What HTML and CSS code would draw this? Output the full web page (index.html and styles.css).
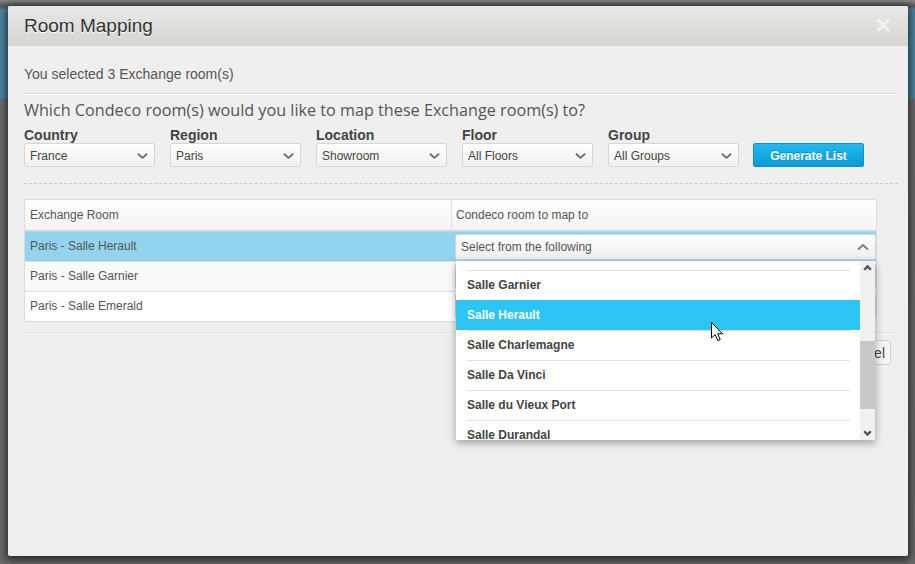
FILE: index.html
```html
<!DOCTYPE html>
<html>
<head>
<meta charset="utf-8">
<title>Room Mapping</title>
<link rel="stylesheet" href="styles.css">
</head>
<body>
<div class="modal">
  <div class="modal-header">
    <h1 class="modal-title">Room Mapping</h1>
    <span class="close">×</span>
  </div>
  <div class="modal-body">
    <p class="intro">You selected 3 Exchange room(s)</p>
    <h2 class="question">Which Condeco room(s) would you like to map these Exchange room(s) to?</h2>
    <div class="filters">
      <div class="field">
        <label class="field-label">Country</label>
        <div class="select"><span>France</span><svg class="chev" viewBox="0 0 12 8"><path d="M1 1.5 L6 6 L11 1.5"/></svg></div>
      </div>
      <div class="field">
        <label class="field-label">Region</label>
        <div class="select"><span>Paris</span><svg class="chev" viewBox="0 0 12 8"><path d="M1 1.5 L6 6 L11 1.5"/></svg></div>
      </div>
      <div class="field">
        <label class="field-label">Location</label>
        <div class="select"><span>Showroom</span><svg class="chev" viewBox="0 0 12 8"><path d="M1 1.5 L6 6 L11 1.5"/></svg></div>
      </div>
      <div class="field">
        <label class="field-label">Floor</label>
        <div class="select"><span>All Floors</span><svg class="chev" viewBox="0 0 12 8"><path d="M1 1.5 L6 6 L11 1.5"/></svg></div>
      </div>
      <div class="field">
        <label class="field-label">Group</label>
        <div class="select"><span>All Groups</span><svg class="chev" viewBox="0 0 12 8"><path d="M1 1.5 L6 6 L11 1.5"/></svg></div>
      </div>
      <button class="btn-primary">Generate List</button>
    </div>

    <div class="table">
      <div class="tr thead">
        <div class="td c1">Exchange Room</div>
        <div class="td c2">Condeco room to map to</div>
      </div>
      <div class="tr row-active">
        <div class="td c1">Paris - Salle Herault</div>
        <div class="td c2">
          <div class="room-select open">
            <span>Select from the following</span>
            <svg class="chev up" viewBox="0 0 12 8"><path d="M1 6.5 L6 2 L11 6.5"/></svg>
            <div class="dropdown">
              <ul class="options">
                <li class="opt"><span>Salle Garnier</span></li>
                <li class="opt selected"><span>Salle Herault</span></li>
                <li class="opt"><span>Salle Charlemagne</span></li>
                <li class="opt"><span>Salle Da Vinci</span></li>
                <li class="opt"><span>Salle du Vieux Port</span></li>
                <li class="opt"><span>Salle Durandal</span></li>
              </ul>
              <div class="scrollbar">
                <svg class="sb-arrow" viewBox="0 0 8 6"><path d="M1 5 L4 2 L7 5"/></svg>
                <div class="sb-track"><div class="sb-thumb"></div></div>
                <svg class="sb-arrow" viewBox="0 0 8 6"><path d="M1 1 L4 4 L7 1"/></svg>
              </div>
            </div>
          </div>
        </div>
      </div>
      <div class="tr row-alt">
        <div class="td c1">Paris - Salle Garnier</div>
        <div class="td c2"><div class="room-select"></div></div>
      </div>
      <div class="tr">
        <div class="td c1">Paris - Salle Emerald</div>
        <div class="td c2"><div class="room-select"></div></div>
      </div>
    </div>

    <div class="footer">
      <button class="btn-default">Cancel</button>
    </div>
  </div>
</div>
<svg class="cursor" viewBox="0 0 13 20"><path d="M0.5 0.5 L0.5 16 L4.2 12.6 L6.8 18.6 L9.2 17.6 L6.7 11.8 L11.6 11.8 Z"/></svg>
</body>
</html>
```

FILE: styles.css
```css
* { box-sizing: border-box; }
html, body { margin: 0; padding: 0; }
body {
  width: 915px;
  height: 564px;
  overflow: hidden;
  font-family: "Liberation Sans", Arial, sans-serif;
  background: linear-gradient(to bottom, #8a8a8a 0, #575757 6px, #4f86a2 10px, #4f86a2 98px, #6c6c6c 100px, #6a6a6a 100%);
  position: relative;
}
.modal {
  margin: 6px 0 0 8px;
  width: 900px;
  height: 550px;
  background: #efefef;
  border-radius: 2px;
  box-shadow: 0 2px 8px 2px rgba(0,0,0,0.65);
}
.modal-header {
  height: 40px;
  padding: 0 16px;
  display: flex;
  align-items: center;
  justify-content: space-between;
  background: linear-gradient(to bottom, #e9e9e7, #d5d5d1);
  border-radius: 2px 2px 0 0;
}
.modal-title {
  margin: 0;
  font-size: 19px;
  font-weight: normal;
  color: #333;
  text-shadow: 0 1px 0 #fff;
}
.close {
  font-size: 26px;
  font-weight: bold;
  color: #f3f3f1;
  line-height: 1;
  margin-right: 1px;
  margin-top: -2px;
}
.modal-body {
  padding: 0 10px 0 16px;
}
.intro {
  margin: 0;
  padding: 20px 0 11px;
  font-size: 14px;
  line-height: 16px;
  color: #555;
  border-bottom: 1px solid #dcdcdc;
  box-shadow: 0 1px 0 #fafafa;
}
.question {
  margin: 5px 0 0;
  font-family: "Open Sans", sans-serif;
  font-size: 16.2px;
  font-weight: normal;
  line-height: 22px;
  color: #555;
}
.filters {
  display: flex;
  align-items: flex-end;
  gap: 15px;
  margin-top: 6px;
  padding-bottom: 16px;
  border-bottom: 1px dashed #c8c8c8;
}
.field {
  width: 131px;
  display: flex;
  flex-direction: column;
}
.field-label {
  font-size: 14px;
  font-weight: bold;
  line-height: 16px;
  color: #444;
}
.select {
  height: 24px;
  border: 1px solid #d6d6d6;
  border-radius: 2px;
  background: linear-gradient(to bottom, #ffffff, #f1f1f1);
  display: flex;
  align-items: center;
  justify-content: space-between;
  padding: 1px 6px 0 5px;
  font-size: 12px;
  color: #444;
}
.chev {
  width: 11px;
  height: 8px;
  fill: none;
  stroke: #6a6a6a;
  stroke-width: 2;
}
.btn-primary {
  height: 24px;
  width: 111px;
  margin-left: -1px;
  border: 1px solid #1391c9;
  border-radius: 2px;
  background: linear-gradient(to bottom, #21b9ef, #0a9ad8);
  color: #fff;
  font-family: "Liberation Sans", Arial, sans-serif;
  font-size: 12px;
  font-weight: bold;
  text-shadow: 0 -1px 0 rgba(0,0,0,0.2);
  padding: 1px 0 0;
}
.table {
  margin-top: 15px;
  width: 853px;
  border: 1px solid #dcdcdc;
  background: #fff;
}
.tr {
  display: flex;
  height: 30px;
  border-top: 1px solid #e0e0e0;
}
.tr.thead {
  height: 31px;
  border-top: none;
  background: linear-gradient(to bottom, #ffffff, #f4f4f4);
  border-bottom: 1px solid #d8d8d8;
}
.tr.thead + .tr { border-top: 1px solid #a9dcf0; }
.td {
  display: flex;
  align-items: center;
  font-size: 12px;
  color: #555;
  padding-bottom: 1px;
}
.c1 { width: 426px; padding-left: 5px; }
.c2 { flex: 1; padding-left: 4px; }
.thead .c2 { border-left: 1px solid #e0e0e0; }
.row-active { background: #92d4ee; }
.row-alt { background: #fafafa; }
.row-active .c2 { align-items: flex-start; padding-top: 2px; padding-bottom: 0; }
.room-select {
  position: relative;
  width: 421px;
  height: 26px;
  border: 1px solid #d0d6d9;
  border-radius: 2px;
  background: linear-gradient(to bottom, #ffffff, #eeeeee);
  display: flex;
  align-items: center;
  justify-content: space-between;
  padding: 0 6px 1px 5px;
  font-size: 12px;
  color: #555;
}
.row-active .room-select { border-color: #c6d9e0; }
.chev.up { width: 12px; stroke: #808080; }
.dropdown {
  position: absolute;
  left: 0;
  top: 26px;
  width: 419px;
  height: 179px;
  background: #fff;
  display: flex;
  box-shadow: 0 3px 8px rgba(0,0,0,0.35);
  overflow: hidden;
  z-index: 5;
}
.options {
  list-style: none;
  margin: 9px 0 0;
  padding: 0;
  flex: 1;
}
.opt {
  height: 30px;
  padding: 0 10px 0 11px;
  font-size: 12px;
  font-weight: bold;
  color: #444;
}
.opt span {
  display: flex;
  align-items: center;
  height: 30px;
  padding-bottom: 2px;
  border-top: 1px solid #e2e2e2;
}
.opt.selected { background: #2ec4f4; color: #fff; }
.opt.selected span { border-top-color: transparent; }
.opt.selected + .opt span { border-top-color: #dcdcdc; }
.scrollbar {
  width: 15px;
  background: #f1f1f1;
  display: flex;
  flex-direction: column;
  align-items: center;
}
.sb-arrow {
  width: 9px;
  height: 7px;
  fill: none;
  stroke: #505050;
  stroke-width: 2;
  margin: 3px 0;
}
.sb-track {
  flex: 1;
  width: 15px;
  padding-top: 67px;
}
.sb-thumb {
  width: 15px;
  height: 68px;
  background: #c8c8c8;
}
.footer {
  margin-top: 10px;
  border-top: 1px solid #dedede;
  box-shadow: inset 0 1px 0 #f8f8f8;
  display: flex;
  justify-content: flex-end;
  padding: 7px 7px 0 0;
}
.btn-default {
  height: 25px;
  padding: 0 5px 0 12px;
  border: 1px solid #cfcfcf;
  border-radius: 3px;
  background: #f5f5f5;
  color: #444;
  font-family: "Liberation Sans", Arial, sans-serif;
  font-size: 14px;
}
.cursor {
  position: absolute;
  left: 711px;
  top: 322px;
  width: 13px;
  height: 20px;
  fill: #fff;
  stroke: #000;
  stroke-width: 1;
  z-index: 10;
}
```
